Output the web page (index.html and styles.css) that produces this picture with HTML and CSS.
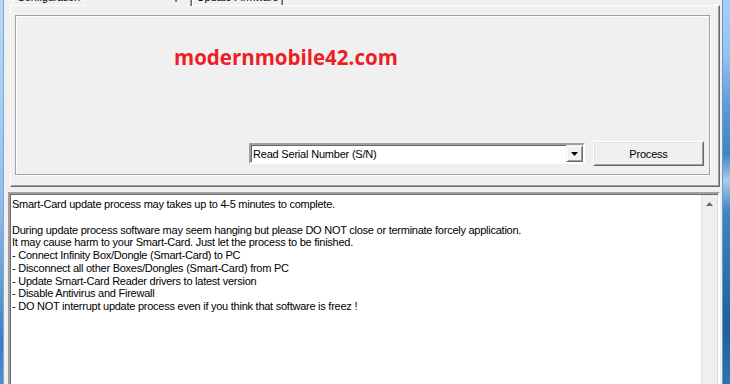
FILE: index.html
```html
<!DOCTYPE html>
<html>
<head>
<meta charset="utf-8">
<title>Smart-Card Update</title>
<link rel="stylesheet" href="styles.css">
</head>
<body>
<div class="window">
  <div class="frame frame-left"></div>
  <div class="main">
    <div class="tabs">
      <div class="tab tab-config"><span class="tab-label">Configuration</span></div>
      <div class="tab tab-active"><span class="tab-label">Smart-Card Setup</span></div>
      <div class="tab tab-firmware"><span class="tab-label">Update Firmware</span></div>
    </div>
    <div class="tab-page">
      <div class="group">
        <div class="brand">modernmobile42.com</div>
        <div class="controls">
          <div class="combo">
            <span class="combo-text">Read Serial Number (S/N)</span>
            <span class="combo-btn">
              <svg width="7" height="4" viewBox="0 0 7 4"><path d="M0 0H7L3.5 4Z" fill="#000"/></svg>
            </span>
          </div>
          <button class="btn">Process</button>
        </div>
      </div>
    </div>
    <div class="memo">
      <div class="memo-text">
        <div class="line">Smart-Card update process may takes up to 4-5 minutes to complete.</div>
        <div class="line line-blank"></div>
        <div class="line">During update process software may seem hanging but please DO NOT close or terminate forcely application.</div>
        <div class="line">It may cause harm to your Smart-Card. Just let the process to be finished.</div>
        <div class="line">- Connect Infinity Box/Dongle (Smart-Card) to PC</div>
        <div class="line">- Disconnect all other Boxes/Dongles (Smart-Card) from PC</div>
        <div class="line">- Update Smart-Card Reader drivers to latest version</div>
        <div class="line">- Disable Antivirus and Firewall</div>
        <div class="line">- DO NOT interrupt update process even if you think that software is freez !</div>
      </div>
      <div class="scrollbar">
        <div class="scroll-up">
          <svg width="7" height="4" viewBox="0 0 7 4"><path d="M3.5 0L7 4H0Z" fill="#6d6d6d"/></svg>
        </div>
      </div>
    </div>
  </div>
  <div class="frame frame-right"></div>
</div>
</body>
</html>
```

FILE: styles.css
```css
html, body {
  margin: 0;
  padding: 0;
}
body {
  width: 730px;
  height: 384px;
  overflow: hidden;
  background: #f0f0f0;
  font-family: "Liberation Sans", Arial, sans-serif;
  font-size: 11px;
  color: #000;
}
.window {
  display: flex;
  height: 384px;
}
.frame-left {
  width: 4px;
  flex: none;
  background:
    linear-gradient(to right, transparent 3px, #7fa7cf 3px),
    linear-gradient(to bottom, #b6d8f6 0%, #a3cdf3 30%, #8dbbe8 55%, #5f9ad3 75%, #3c7cbd 90%, #4f8fcc 100%);
}
.frame-right {
  width: 8px;
  flex: none;
  background:
    linear-gradient(to right, #6b98c9 0 1px, transparent 1px),
    linear-gradient(to bottom, #a6d0f7 0%, #93c4f1 14%, #5d9ad6 28%, #3f83c6 40%, #a9cdeb 47%, #3f85c4 55%, #2d73b3 70%, #1f5f9e 85%, #2c74b4 100%);
}
.main {
  flex: 1;
  display: flex;
  flex-direction: column;
  overflow: hidden;
}

/* tabs */
.tabs {
  flex: none;
  display: flex;
  height: 5px;
  padding-left: 8px;
}
.tab {
  box-sizing: border-box;
  height: 5px;
  overflow: hidden;
  text-align: center;
  border-left: 1px solid #fff;
  letter-spacing: -0.2px;
}
.tab-label {
  display: block;
  margin-top: -9px;
  line-height: 13px;
  white-space: nowrap;
}
.tab-config {
  width: 72px;
}
.tab-active {
  position: relative;
  z-index: 1;
  width: 108px;
  height: 6px;
  margin-bottom: -1px;
  background: #f0f0f0;
  border-right: 1px solid #696969;
  box-shadow: inset -1px 0 0 #a0a0a0;
}
.tab-active .tab-label {
  margin-top: -10px;
}
.tab-firmware {
  width: 91px;
  border-right: 1px solid #696969;
  box-shadow: inset -1px 0 0 #a0a0a0;
}

.tab-page {
  flex: none;
  box-sizing: border-box;
  margin: 0 2px 0 6px;
  height: 182px;
  padding: 9px 9px 0 4px;
  border-top: 1px solid #fff;
  border-left: 1px solid #fff;
  border-right: 1px solid #696969;
  border-bottom: 1px solid #696969;
  box-shadow: inset -1px -1px 0 #a0a0a0;
}
.group {
  box-sizing: border-box;
  height: 160px;
  border: 1px solid #a0a0a0;
  box-shadow: inset 1px 1px 0 #fff, 1px 1px 0 #fff;
  display: flex;
  flex-direction: column;
}
.brand {
  margin: 27px 0 0 158px;
  font-family: "Open Sans", "Liberation Sans", sans-serif;
  font-weight: 700;
  font-size: 20.5px;
  line-height: 28px;
  color: #ee1c25;
}
.controls {
  margin-top: auto;
  display: flex;
  align-items: center;
  justify-content: flex-end;
  gap: 8px;
  padding: 0 5px 8px 0;
}
.combo {
  box-sizing: border-box;
  width: 336px;
  height: 21px;
  display: flex;
  align-items: stretch;
  background: #fff;
  border: 2px solid;
  border-color: #a0a0a0 #fff #fff #a0a0a0;
  box-shadow: inset 1px 1px 0 #696969;
  letter-spacing: -0.2px;
}
.combo-text {
  flex: 1;
  padding-left: 2px;
  line-height: 16px;
  padding-top: 1px;
}
.combo-btn {
  box-sizing: border-box;
  width: 17px;
  display: flex;
  align-items: center;
  justify-content: center;
  background: #f0f0f0;
  border-top: 1px solid #f0f0f0;
  border-left: 1px solid #f0f0f0;
  border-right: 1px solid #696969;
  border-bottom: 1px solid #696969;
  box-shadow: inset 1px 1px 0 #fff, inset -1px -1px 0 #a0a0a0;
}
.btn {
  box-sizing: border-box;
  width: 111px;
  height: 25px;
  margin: 0;
  padding: 0;
  font-family: "Liberation Sans", Arial, sans-serif;
  font-size: 11px;
  letter-spacing: -0.2px;
  color: #000;
  background: #f0f0f0;
  border: 1px solid;
  border-color: #fff #696969 #696969 #fff;
  box-shadow: inset 1px 1px 0 #e3e3e3, inset -1px -1px 0 #a0a0a0;
}

/* memo */
.memo {
  box-sizing: border-box;
  flex: none;
  height: 200px;
  margin: 5px 2px 0 4px;
  display: flex;
  background: #fff;
  border: 2px solid;
  border-color: #a0a0a0 #fff #fff #a0a0a0;
  box-shadow: inset 1px 1px 0 #696969;
}
.memo-text {
  flex: 1;
  padding: 4px 0 0 2px;
  line-height: 12.75px;
  letter-spacing: -0.25px;
  white-space: nowrap;
  overflow: hidden;
}
.line-blank {
  height: 12.75px;
}
.scrollbar {
  box-sizing: border-box;
  width: 17px;
  flex: none;
  margin-top: 1px;
  background: #efefef;
  border-left: 1px solid #e4e4e4;
  border-right: 1px solid #d9d9d9;
}
.scroll-up {
  height: 17px;
  display: flex;
  align-items: center;
  justify-content: center;
}
```
